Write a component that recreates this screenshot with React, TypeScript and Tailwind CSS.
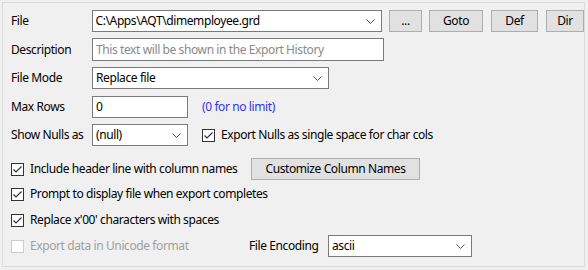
import React from "react";

const Chevron = () => (
  <svg width="9" height="5" viewBox="0 0 9 5" className="shrink-0">
    <polyline points="0.5,0.5 4.5,4.5 8.5,0.5" fill="none" stroke="#505050" strokeWidth="1" />
  </svg>
);

const Check = ({ checked = true, disabled = false }: { checked?: boolean; disabled?: boolean }) => (
  <div
    className={`w-[13px] h-[13px] shrink-0 border bg-white flex items-center justify-center ${
      disabled ? "border-[#cccccc]" : "border-[#333333]"
    }`}
  >
    {checked && (
      <svg width="11" height="11" viewBox="0 0 11 11">
        <polyline points="1.5,5.5 4,8 9.5,2.5" fill="none" stroke="#333333" strokeWidth="1.2" />
      </svg>
    )}
  </div>
);

const Select = ({ text, w }: { text: string; w: string }) => (
  <div className={`${w} h-[22px] border border-[#7a7a7a] bg-white flex items-center pl-[3px] pr-[6px]`}>
    <span className="flex-1 overflow-hidden">{text}</span>
    <Chevron />
  </div>
);

const Btn = ({ children, w }: { children: React.ReactNode; w: string }) => (
  <div className={`${w} h-[22px] border border-[#adadad] bg-[#e1e1e1] flex items-center justify-center`}>
    {children}
  </div>
);

export default function App() {
  return (
    <div
      className="w-[588px] h-[270px] bg-[#f0f0f0] p-[2px] text-[12px] tracking-[-0.4px] text-black leading-[16px] whitespace-nowrap"
      style={{ fontFamily: '"Noto Sans", "Open Sans", sans-serif' }}
    >
      <div className="w-[583px] h-[265px] border border-[#dadada] pl-[8px] pt-[7px] flex flex-col">
        {/* File */}
        <div className="flex items-center h-[22px]">
          <div className="w-[81px]">File</div>
          <Select text="C:\Apps\AQT\dimemployee.grd" w="w-[292px]" />
          <div className="ml-[7px]"><Btn w="w-[33px]">...</Btn></div>
          <div className="ml-[7px]"><Btn w="w-[54px]">Goto</Btn></div>
          <div className="ml-[8px]"><Btn w="w-[47px]">Def</Btn></div>
          <div className="ml-[8px]"><Btn w="w-[38px]">Dir</Btn></div>
        </div>
        {/* Description */}
        <div className="flex items-center h-[23px] mt-[6px]">
          <div className="w-[81px]">Description</div>
          <div className="w-[292px] h-[23px] border border-[#7a7a7a] bg-white flex items-center pl-[3px] text-[#8a8a8a]">
            This text will be shown in the Export History
          </div>
        </div>
        {/* File Mode */}
        <div className="flex items-center h-[22px] mt-[6px]">
          <div className="w-[81px]">File Mode</div>
          <Select text="Replace file" w="w-[237px]" />
        </div>
        {/* Max Rows */}
        <div className="flex items-center h-[22px] mt-[7px]">
          <div className="w-[81px]">Max Rows</div>
          <div className="w-[96px] h-[22px] border border-[#7a7a7a] bg-white flex items-center pl-[3px]">0</div>
          <div className="ml-[14px] text-[#3232ff]">(0 for no limit)</div>
        </div>
        {/* Show Nulls */}
        <div className="flex items-center h-[22px] mt-[6px]">
          <div className="w-[81px]">Show Nulls as</div>
          <Select text="(null)" w="w-[96px]" />
          <div className="ml-[14px] flex items-center gap-[6px]">
            <Check />
            <span>Export Nulls as single space for char cols</span>
          </div>
        </div>
        {/* Include header */}
        <div className="flex items-center h-[22px] mt-[12px]">
          <div className="w-[240px] flex items-center gap-[6px]">
            <Check />
            <span>Include header line with column names</span>
          </div>
          <Btn w="w-[169px]">Customize Column Names</Btn>
        </div>
        {/* Prompt */}
        <div className="flex items-center h-[22px] mt-[3px] gap-[6px]">
          <Check />
          <span>Prompt to display file when export completes</span>
        </div>
        {/* Replace */}
        <div className="flex items-center h-[22px] mt-[4px] gap-[6px]">
          <Check />
          <span>Replace x'00' characters with spaces</span>
        </div>
        {/* Unicode */}
        <div className="flex items-center h-[22px] mt-[4px]">
          <div className="w-[238px] flex items-center gap-[6px] text-[#a0a0a0]">
            <Check checked={false} disabled />
            <span>Export data in Unicode format</span>
          </div>
          <div className="w-[79px]">File Encoding</div>
          <Select text="ascii" w="w-[144px]" />
        </div>
      </div>
    </div>
  );
}
